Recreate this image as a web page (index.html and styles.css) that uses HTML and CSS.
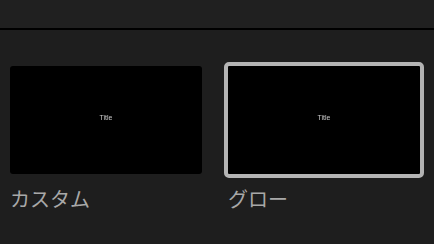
FILE: index.html
```html
<!DOCTYPE html>
<html lang="ja">
<head>
    <meta charset="UTF-8">
    <meta name="viewport" content="width=device-width, initial-scale=1.0">
    <title>Title Styles</title>
    <link rel="stylesheet" href="styles.css">
</head>
<body>
    <div class="toolbar"></div>
    <div class="presets">
        <div class="preset">
            <div class="thumb">
                <span class="thumb-title">Title</span>
            </div>
            <div class="preset-name">カスタム</div>
        </div>
        <div class="preset selected">
            <div class="thumb">
                <span class="thumb-title">Title</span>
            </div>
            <div class="preset-name">グロー</div>
        </div>
    </div>
</body>
</html>
```

FILE: styles.css
```css
body {
    margin: 0;
    background: #1e1e1e;
    font-family: "Noto Sans CJK JP", "Noto Sans", sans-serif;
    height: 244px;
    overflow: hidden;
}
.toolbar {
    height: 28px;
    background: #202020;
    border-bottom: 2px solid #000;
}
.presets {
    display: grid;
    grid-template-columns: 200px 200px;
    column-gap: 18px;
    padding: 32px 6px 0;
}
.thumb {
    height: 108px;
    background: #000;
    border: 4px solid transparent;
    border-radius: 7px;
    background-clip: padding-box;
    display: flex;
    align-items: center;
    justify-content: center;
}
.preset.selected .thumb {
    border-color: #b4b4b4;
    border-radius: 5px;
}
.thumb-title {
    font-family: "Liberation Sans", Arial, sans-serif;
    font-size: 7px;
    color: #c8c8c8;
    margin-bottom: 6px;
    filter: grayscale(1);
}
.preset-name {
    margin-top: 6px;
    padding-left: 4px;
    font-size: 20px;
    line-height: 30px;
    color: #a8a8a8;
}
```
